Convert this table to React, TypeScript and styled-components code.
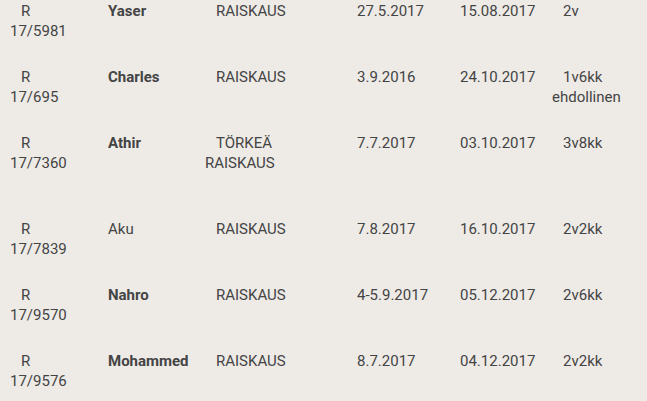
import React from 'react';
import styled, { createGlobalStyle } from 'styled-components';

const GlobalStyle = createGlobalStyle`
  html, body {
    margin: 0;
    padding: 0;
    background: #eeebe7;
  }
  body {
    font-family: Roboto, 'Liberation Sans', sans-serif;
    color: #444;
    overflow: hidden;
  }
`;

const Page = styled.div`
  padding-left: 10px;
  margin-top: -12px;
`;

const Table = styled.div`
  display: grid;
  grid-template-columns: 87px 108px 141px 103px 103px 1fr;
`;

const Row = styled.div<{ $extra?: boolean }>`
  display: contents;
  & > div {
    padding-top: 13px;
    padding-bottom: ${(p) => (p.$extra ? 33 : 13)}px;
  }
`;

const Cell = styled.div<{ $bold?: boolean }>`
  font-size: 15px;
  line-height: 20px;
  text-indent: 11px;
  font-weight: ${(p) => (p.$bold ? 700 : 400)};
  white-space: nowrap;
`;

interface Case {
  id: [string, string];
  name: string;
  bold: boolean;
  crime: string[];
  date: string;
  verdict: string;
  sentence: string[];
}

const cases: Case[] = [
  { id: ['R', '17/5981'], name: 'Yaser', bold: true, crime: ['RAISKAUS'], date: '27.5.2017', verdict: '15.08.2017', sentence: ['2v'] },
  { id: ['R', '17/695'], name: 'Charles', bold: true, crime: ['RAISKAUS'], date: '3.9.2016', verdict: '24.10.2017', sentence: ['1v6kk', 'ehdollinen'] },
  { id: ['R', '17/7360'], name: 'Athir', bold: true, crime: ['TÖRKEÄ', 'RAISKAUS'], date: '7.7.2017', verdict: '03.10.2017', sentence: ['3v8kk'] },
  { id: ['R', '17/7839'], name: 'Aku', bold: false, crime: ['RAISKAUS'], date: '7.8.2017', verdict: '16.10.2017', sentence: ['2v2kk'] },
  { id: ['R', '17/9570'], name: 'Nahro', bold: true, crime: ['RAISKAUS'], date: '4-5.9.2017', verdict: '05.12.2017', sentence: ['2v6kk'] },
  { id: ['R', '17/9576'], name: 'Mohammed', bold: true, crime: ['RAISKAUS'], date: '8.7.2017', verdict: '04.12.2017', sentence: ['2v2kk'] },
];

const Lines: React.FC<{ lines: string[] }> = ({ lines }) => (
  <>
    {lines.map((l, i) => (
      <React.Fragment key={i}>
        {i > 0 && <br />}
        {l}
      </React.Fragment>
    ))}
  </>
);

const App = () => {
  return (
    <>
      <GlobalStyle />
      <Page>
        <Table>
          {cases.map((c) => (
            <Row key={c.id[1]} $extra={c.crime.length > 1}>
              <Cell>
                <Lines lines={c.id} />
              </Cell>
              <Cell $bold={c.bold}>{c.name}</Cell>
              <Cell>
                <Lines lines={c.crime} />
              </Cell>
              <Cell>{c.date}</Cell>
              <Cell>{c.verdict}</Cell>
              <Cell>
                <Lines lines={c.sentence} />
              </Cell>
            </Row>
          ))}
        </Table>
      </Page>
    </>
  );
};

export default App;
